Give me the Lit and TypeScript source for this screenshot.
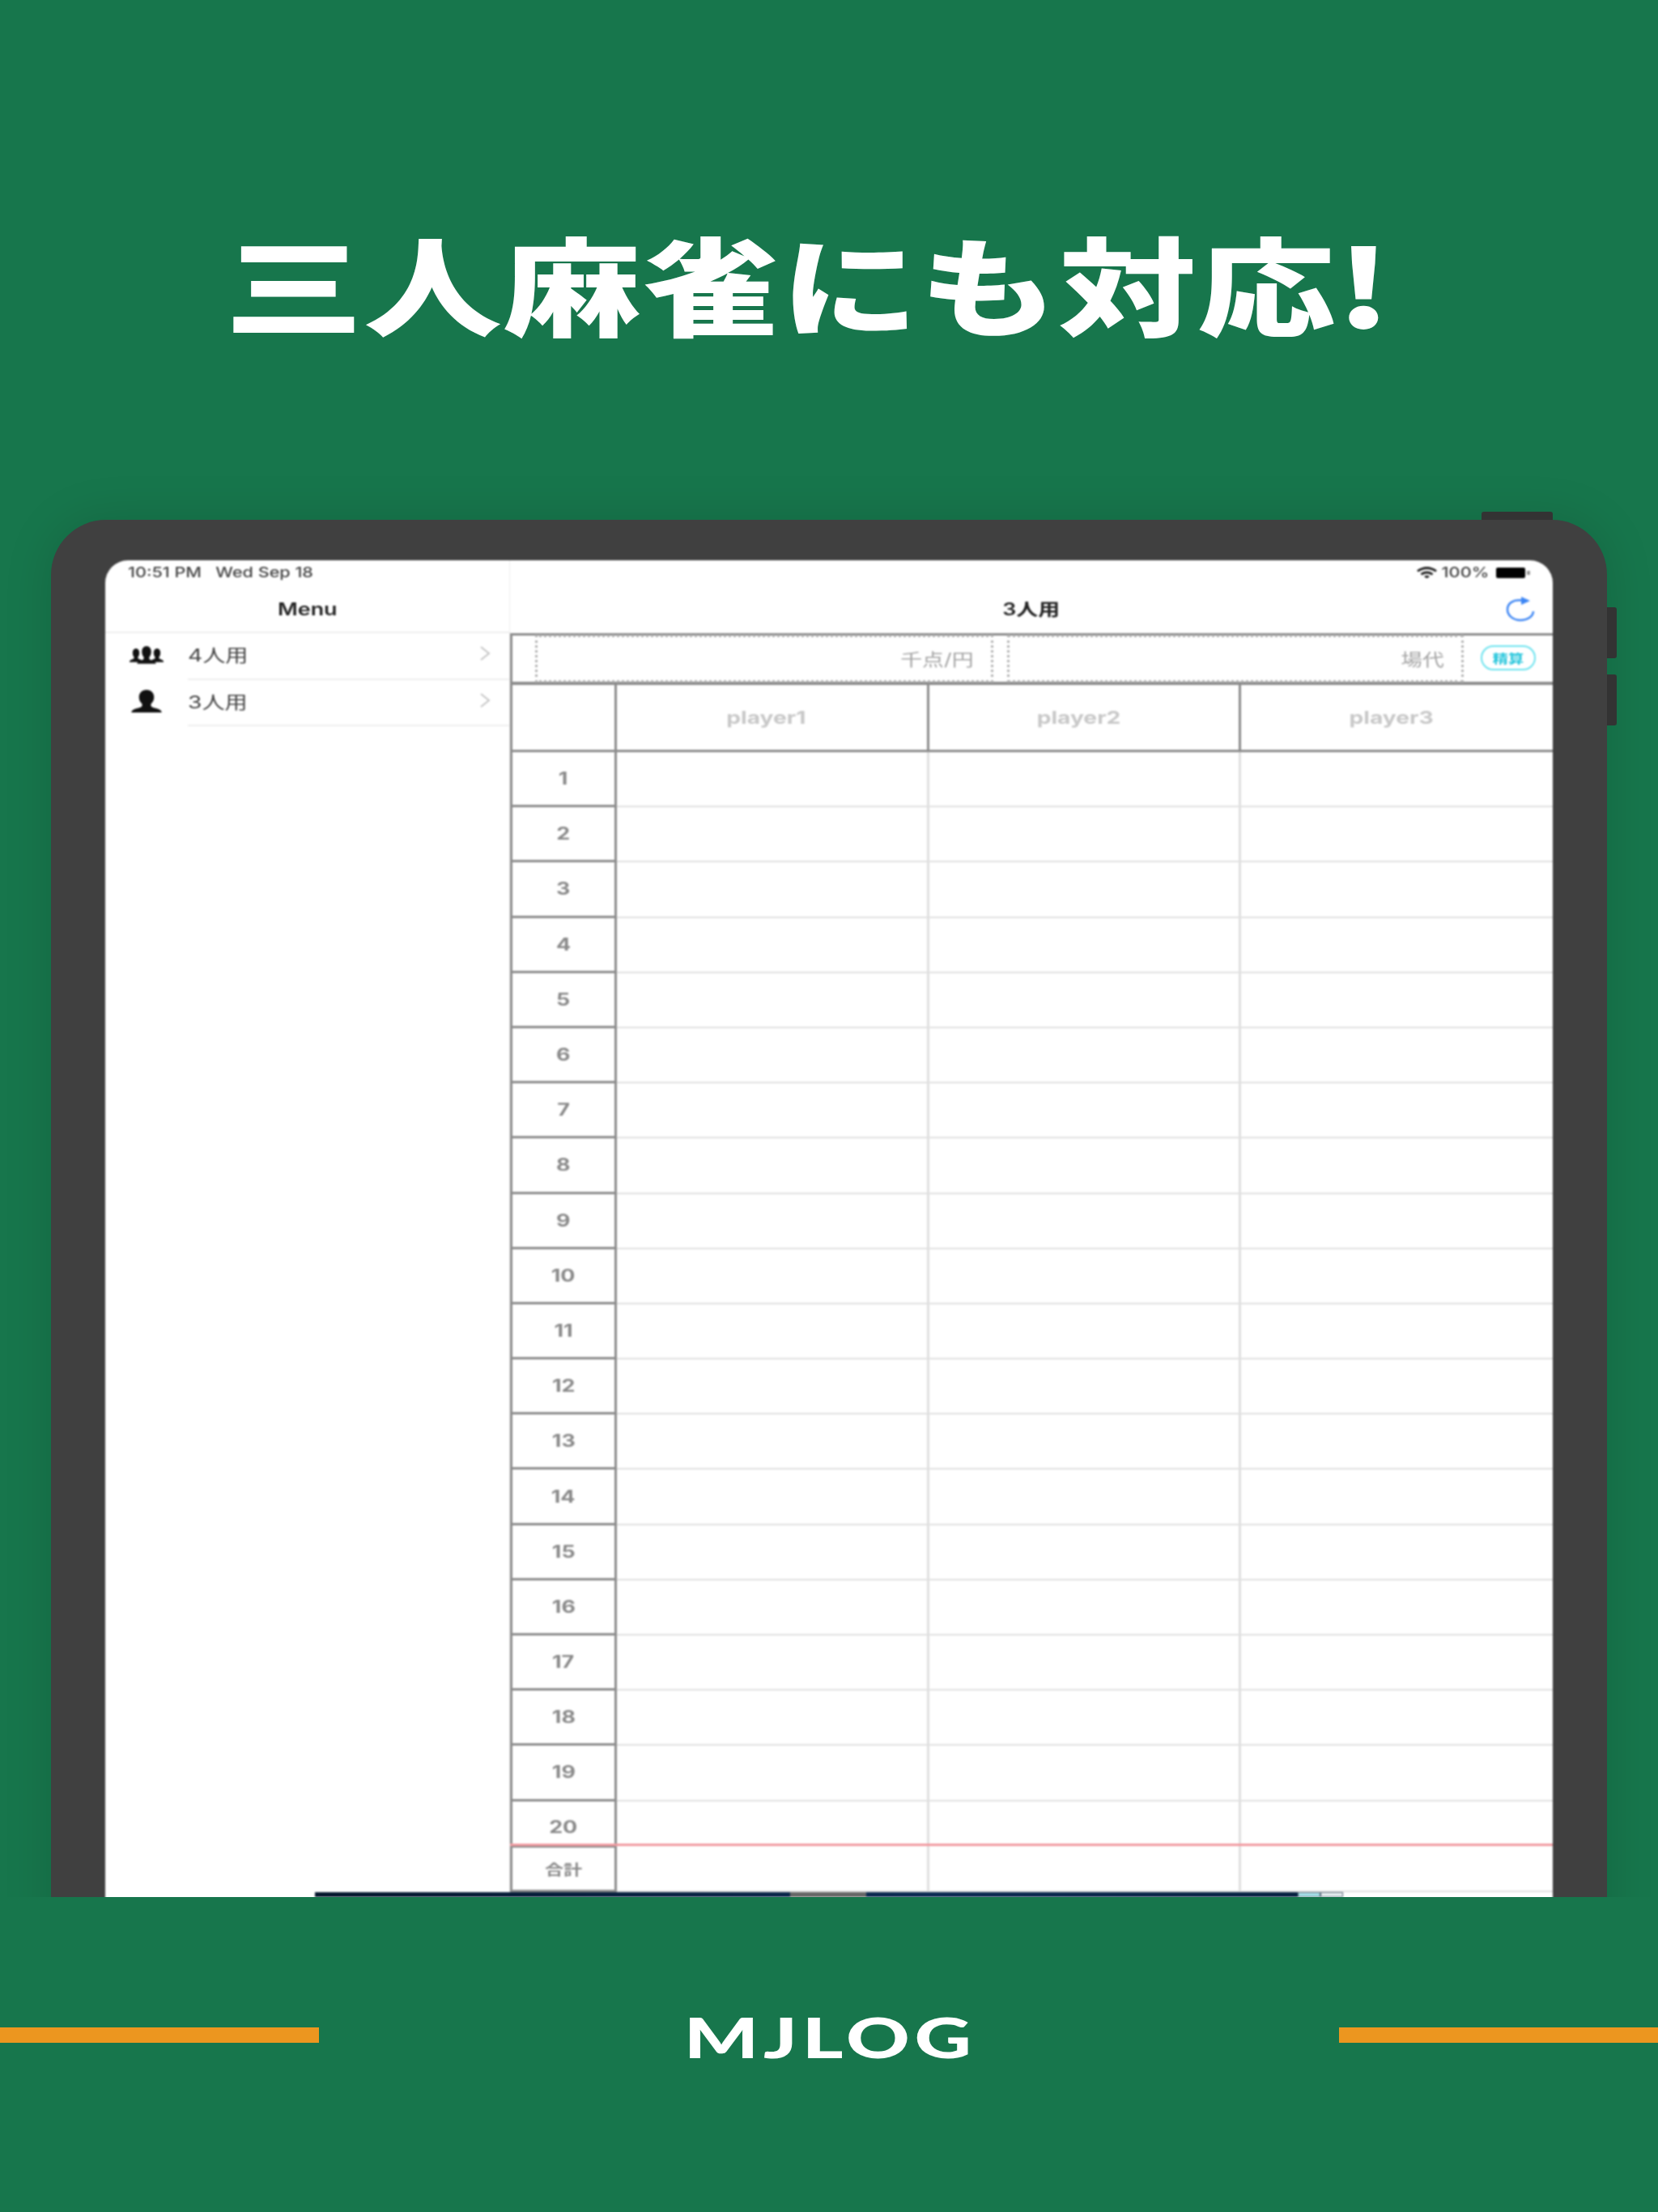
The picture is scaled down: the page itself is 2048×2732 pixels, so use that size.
import { LitElement, html, css, svg } from "lit";
import { customElement } from "lit/decorators.js";

const rows = Array.from({ length: 19 }, (_, i) => i + 1);

const person = (cx: number, top: number, sx: number, sy: number) => svg`
  <path transform="translate(${cx} ${top}) scale(${sx} ${sy})" d="M0 0c-5 0-8 4-8 9 0 3 1 6 3 8 .6 1 .6 3-.5 4-2 1.500-7 2-9 4-1.500 1-1.500 2-1.500 3h32c0-1 0-2-1.500-3-2-2-7-2.500-9-4-1.100-1-1.100-3-.5-4 2-2 3-5 3-8 0-5-3-9-8-9z"/>`;

@customElement("app-root")
export class AppRoot extends LitElement {
  static styles = css`
    :host { display: block; width: 2048px; height: 2732px; background: #17764c; font-family: Inter, "Noto Sans CJK JP", sans-serif; }
    .hero { height: 2343px; overflow: hidden; display: flex; flex-direction: column; }
    .title { margin-top: 268px; height: 160px; flex: none; display: flex; justify-content: center; align-items: center; }
    .title span { display: inline-block; font: 900 132px/160px "Noto Sans CJK JP", sans-serif; color: #fff; transform: scaleX(1.29); white-space: nowrap; margin-right: 50px; letter-spacing: 1px; }
    .device { position: relative; flex: none; margin: 214px 0 0 63px; width: 1922px; height: 1800px; box-sizing: border-box; padding: 50px 67px 0; background: #404040; border-radius: 68px 68px 0 0; box-shadow: 0 0 60px rgba(0, 0, 0, .13); }
    .btn { position: absolute; background: #333; }
    .btn.top { left: 1767px; top: -10px; width: 88px; height: 10px; border-radius: 3px 3px 0 0; }
    .btn.s1 { left: 1922px; top: 108px; width: 12px; height: 63px; border-radius: 0 3px 3px 0; }
    .btn.s2 { left: 1922px; top: 191px; width: 12px; height: 63px; border-radius: 0 3px 3px 0; }
    .screen { position: relative; display: flex; height: 1700px; background: #fff; border-radius: 28px 28px 0 0; overflow: hidden; filter: blur(1px); color: #333; }
    .side { flex: none; width: 499px; border-right: 1px solid #eee; }
    .status { height: 30px; display: flex; align-items: center; font-size: 17px; font-weight: 500; color: #444; }
    .sx { display: inline-block; transform: scaleX(1.28); white-space: nowrap; }
    .sl { transform-origin: left center; }
    .status .clock { margin-left: 28px; transform: scaleX(1.27); }
    .nav { height: 60px; display: flex; align-items: center; justify-content: center; font-size: 21px; font-weight: 600; color: #222; box-sizing: border-box; }
    .side .nav { border-bottom: 2px solid #eee; padding-top: 2px; }
    .item { height: 57.500px; display: flex; align-items: center; box-sizing: border-box; }
    .item svg.ic { flex: none; width: 42px; height: 28px; margin-left: 30px; margin-top: -4px; fill: #111; }
    .item .body { margin-left: 30px; flex: 1; height: 100%; display: flex; align-items: center; justify-content: space-between; border-bottom: 2px solid #eee; box-sizing: border-box; font-size: 22px; color: #444; padding-right: 23px; padding-bottom: 5px; }
    .chev { width: 14px; height: 18px; fill: none; stroke: #c6c6c6; stroke-width: 2; }
    .main { flex: 1; min-width: 0; }
    .status.r { justify-content: flex-end; padding-right: 27px; gap: 9px; }
    .pct { margin-right: 6px; }
    .wifi { width: 25px; height: 14px; fill: #222; margin-right: 3px; }
    .batt { width: 43px; height: 13px; }
    .main .nav { position: relative; padding-bottom: 3px; }
    .refresh { position: absolute; right: 22px; top: 14px; width: 36px; height: 32px; fill: none; stroke: #3d86f4; stroke-width: 2.500; }
    .fields { height: 64px; box-sizing: border-box; border: solid #8c8c8c; border-width: 3px 0 4px 3px; display: flex; align-items: stretch; padding-left: 28px; color: #a4a4a4; font-size: 21px; }
    .field { border: 3px dotted #b4b4b4; box-sizing: border-box; display: flex; align-items: center; justify-content: flex-end; margin: -1px 0 -1px; padding-bottom: 2px; }
    .f1 { width: 566px; padding-right: 21px; }
    .f2 { width: 564px; margin-left: 17px; padding-right: 21px; }
    .sx.sr { transform-origin: right center; }
    .pill { margin: 12px 0 0 21px; width: 68px; height: 31px; box-sizing: border-box; border: 2px solid #6be3ef; border-radius: 16px; display: flex; align-items: center; justify-content: center; font-size: 15px; font-weight: 700; color: #26c6dc; }
    .row { display: grid; grid-template-columns: 132px 386px 385px 385px; height: 68.200px; }
    .row.head { height: 83px; }
    .row.last { height: 52px; }
    .row.total { height: 57px; }
    .num { box-sizing: border-box; border: solid #8c8c8c; border-width: 0 3px 3px 3px; display: flex; align-items: center; justify-content: center; font-size: 21px; font-weight: 700; color: #8a8a8a; }
    .cell { box-sizing: border-box; border: solid #e0e0e0; border-width: 0 3px 2px 0; }
    .cell:last-child { border-right: 0; }
    .head .cell { border-color: #8c8c8c; border-width: 0 3px 3px 0; display: flex; align-items: center; justify-content: center; padding-right: 14px; font-size: 22px; font-weight: 700; color: #c8c8c8; }
    .head .cell:last-child { border-right: 0; }
    .last { position: relative; }
    .last .num { align-items: flex-start; padding-top: 19px; border-bottom: 0; }
    .last .cell { border-bottom: 0; }
    .red { height: 3px; background: #f29aa0; }
    .total .num { font-size: 18px; font-weight: 600; border-top: 2px solid #8c8c8c; }
    .ad { position: absolute; left: 259px; top: 1645px; width: 1270px; height: 6px; display: flex; background: linear-gradient(90deg, #04162c, #0b2a52 60%, #06203f); }
    .ad .gap { margin-left: 587px; width: 94px; background: #666; }
    .ad .b1 { margin-left: auto; width: 28px; background: #a9e6ee; border: 1px solid #567; box-sizing: border-box; }
    .ad .b2 { width: 28px; background: #eef4f6; border: 1px solid #567; box-sizing: border-box; }
    .foot { height: 341px; padding-bottom: 48px; display: flex; align-items: center; justify-content: space-between; }
    .bar { flex: none; width: 394px; height: 19px; background: #ec961f; }
    .logo { font: 900 68px/80px Lato, sans-serif; color: #fff; letter-spacing: 4px; transform: scaleX(1.43); margin-top: 5px; margin-left: 3px; }
  `;

  render() {
    return html`
      <div class="hero">
        <div class="title"><span>三人麻雀にも対応!</span></div>
        <div class="device">
          <div class="btn top"></div><div class="btn s1"></div><div class="btn s2"></div>
          <div class="screen">
            <div class="side">
              <div class="status"><span class="sx sl clock">10:51 PM&nbsp;&nbsp; Wed Sep 18</span></div>
              <div class="nav"><span class="sx">Menu</span></div>
              <div class="item">
                <svg class="ic" viewBox="0 0 42 28">
                  ${person(8, 6, .52, .6)}${person(34, 6, .52, .6)}${person(21, 3, .72, .78)}
                </svg>
                <div class="body"><span class="sx sl">4人用</span>
                  <svg class="chev" viewBox="0 0 14 18"><path d="M2 1l10 8-10 8"/></svg></div>
              </div>
              <div class="item">
                <svg class="ic" viewBox="0 0 42 28">${person(21, 0, 1.16, 1)}</svg>
                <div class="body"><span class="sx sl">3人用</span>
                  <svg class="chev" viewBox="0 0 14 18"><path d="M2 1l10 8-10 8"/></svg></div>
              </div>
            </div>
            <div class="main">
              <div class="status r">
                <svg class="wifi" viewBox="0 0 25 14"><path d="M12.500 0C8 0 4 1.600 0 4.500l2 2C5 4.300 8.500 3 12.500 3s7.500 1.300 10.500 3.500l2-2C21 1.600 17 0 12.500 0zM4.500 8.500l2 2c1.800-1.300 3.800-2 6-2s4.200.7 6 2l2-2c-2.400-1.800-5-3-8-3s-5.600 1.200-8 3zM9 12l3.500 2.500L16 12c-1-.8-2.200-1.200-3.500-1.200S10 11.200 9 12z"/></svg>
                <span class="sx pct">100%</span>
                <svg class="batt" viewBox="0 0 43 13"><rect x="0" y="0" width="36" height="13" rx="2" fill="#000"/><rect x="38" y="4" width="4" height="5" fill="#999"/></svg>
              </div>
              <div class="nav"><span class="sx">3人用</span>
                <svg class="refresh" viewBox="0 0 36 32"><path d="M19 5.500C9 4.500 2 9 2 17c0 7 7 13 16 13s16-5 16-11"/><path d="M19 1l11 5-11 5z" fill="#3d86f4" stroke="none"/></svg>
              </div>
              <div class="fields">
                <div class="field f1"><span class="sx sr">千点/円</span></div>
                <div class="field f2"><span class="sx sr">場代</span></div>
                <div class="pill"><span class="sx">精算</span></div>
              </div>
              <div class="row head"><div class="num"></div>
                <div class="cell"><span class="sx">player1</span></div>
                <div class="cell"><span class="sx">player2</span></div>
                <div class="cell"><span class="sx">player3</span></div>
              </div>
              ${rows.map((n) => html`<div class="row"><div class="num"><span class="sx">${n}</span></div><div class="cell"></div><div class="cell"></div><div class="cell"></div></div>`)}
              <div class="row last"><div class="num"><span class="sx">20</span></div><div class="cell"></div><div class="cell"></div><div class="cell"></div></div>
              <div class="red"></div>
              <div class="row total"><div class="num"><span class="sx">合計</span></div><div class="cell"></div><div class="cell"></div><div class="cell"></div></div>
            </div>
            <div class="ad"><div class="gap"></div><div class="b1"></div><div class="b2"></div></div>
          </div>
        </div>
      </div>
      <div class="foot">
        <div class="bar"></div>
        <div class="logo">MJLOG</div>
        <div class="bar"></div>
      </div>
    `;
  }
}
